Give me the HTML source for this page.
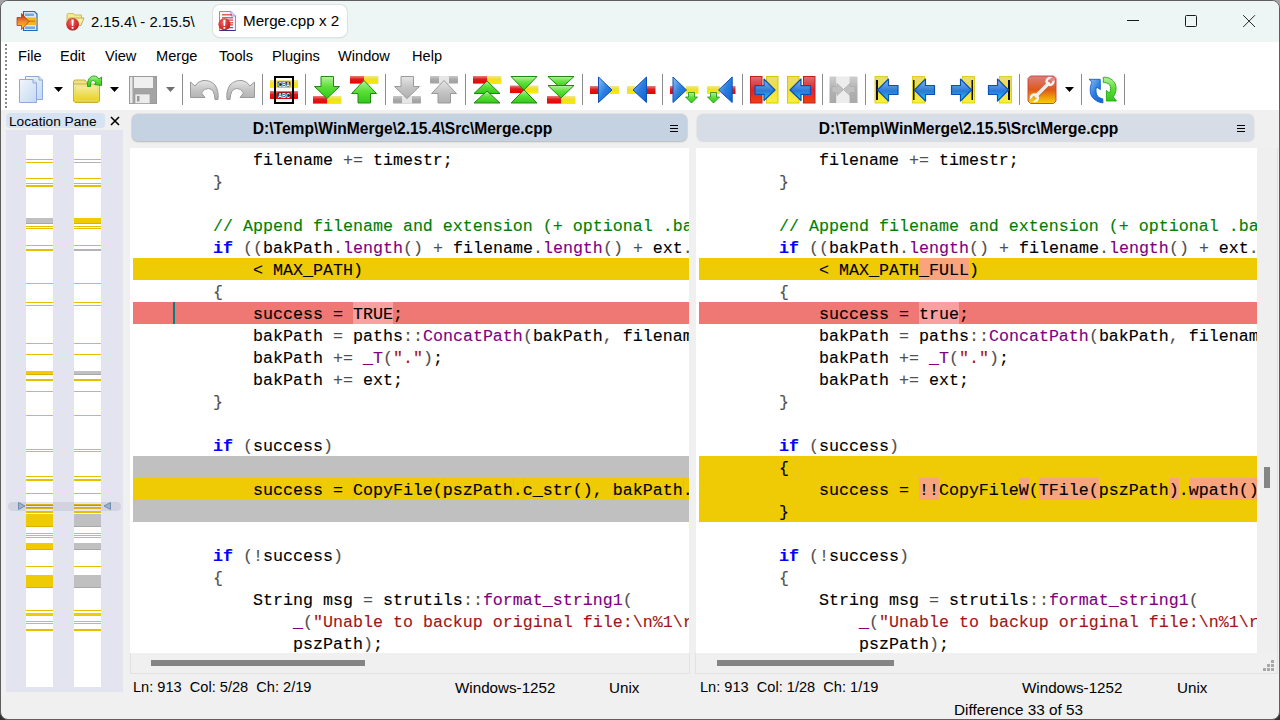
<!DOCTYPE html>
<html><head><meta charset="utf-8">
<style>
*{margin:0;padding:0;box-sizing:border-box}
html,body{width:1280px;height:720px;overflow:hidden;background:linear-gradient(#a4a4a4,#8a8a8a 60%,#303030)}
body{position:relative;font-family:"Liberation Sans",sans-serif;color:#000}
.abs{position:absolute}
#win{position:absolute;left:0;top:0;width:1280px;height:720px;border-radius:8px;background:#f0f0f0;overflow:hidden;border:1px solid #5e5e5e}
#title{position:absolute;left:-1px;top:-1px;width:1280px;height:43px;background:#eef5f5}
#menu{position:absolute;left:-1px;top:41px;width:1280px;height:68px;background:#fff}
.mi{position:absolute;top:48px;font-size:14.6px;color:#000;white-space:pre}
.tab2{position:absolute;left:213px;top:5px;width:134px;height:32px;background:#fff;border-radius:7px;box-shadow:0 0 0 1px #dde3e3, 0 1px 2px rgba(0,0,0,.12)}
.ttl{position:absolute;top:12px;font-size:15.2px;white-space:pre}
.sep{position:absolute;top:74px;width:1px;height:31px;background:#8c8c8c}
#loc{position:absolute;left:6px;top:130px;width:117px;height:562px;background:#e4e4f0}
.lbar{position:absolute;top:135px;width:27px;height:552px;background:#fff}
.lm{position:absolute;width:27px}
.hdr{position:absolute;top:114px;height:27px;border-radius:6px;font-weight:bold;font-size:15.6px;text-align:center;line-height:30px;padding-right:14px;white-space:pre}
.pane{position:absolute;top:148px;height:505px;background:#fff;overflow:hidden}
.code{position:absolute;left:3px;top:0;width:2000px;height:505px}
.bg{position:absolute;left:0;width:2000px;height:22px}
.bg.y{background:#efcb05} .bg.r{background:#ef7774} .bg.g{background:#c0c0c0}
.wy{position:absolute;height:22px;background:#f8a47c}
.wr{position:absolute;height:22px;background:#f9a0a0}
.mk{position:absolute;width:1px;height:22px;background:#f4a0a0}
.caret{position:absolute;width:2px;height:22px;background:#008080}
.ln{position:absolute;left:0;height:22px;line-height:22px;padding-top:2px;font-family:"Liberation Mono",monospace;font-size:16.667px;white-space:pre;color:#000;-webkit-text-stroke:0.12px currentColor}
.ln i{font-style:normal}
.ln .k{color:#0000ff;font-weight:bold}
.ln .f{color:#800080}
.ln .o{color:#505050}
.ln .c{color:#008000}
.ln .s{color:#a31515}
.hs{position:absolute;top:653px;height:20px;background:#f0f0f0}
.hthumb{position:absolute;top:660px;height:6px;background:#858585}
.st{position:absolute;font-size:14.6px;white-space:pre;color:#000}
</style></head><body>
<div id="win">
<div id="title"></div>
<div id="menu"></div>
</div>
<!-- gripper -->
<div class="abs" style="left:5px;top:44px;width:2px;height:28px;background-image:linear-gradient(#8a8a8a 50%,transparent 50%);background-size:2px 4px"></div>
<div class="abs" style="left:5px;top:74px;width:2px;height:34px;background-image:linear-gradient(#8a8a8a 50%,transparent 50%);background-size:2px 4px"></div>
<div class="tab2"></div>
<svg style="position:absolute;left:0;top:0" width="260" height="40" viewBox="0 0 260 40"><defs><linearGradient id="gArr" x1="0" y1="0" x2="0" y2="1"><stop offset="0" stop-color="#b82010"/><stop offset="0.5" stop-color="#f08830"/><stop offset="1" stop-color="#f8d020"/></linearGradient><radialGradient id="gErr2" cx="0.4" cy="0.35" r="0.7"><stop offset="0" stop-color="#f06060"/><stop offset="1" stop-color="#c01818"/></radialGradient></defs><path d="M23.5,11.5 H34.5 L37,14 V30.5 H23.5 Z" fill="#d8e8f8" stroke="#1a6cc0" stroke-width="1.2"/><rect x="25" y="13.5" width="9" height="2.5" fill="#5a9ae0" opacity=".8"/><rect x="25" y="26.5" width="10" height="2.5" fill="#5a9ae0" opacity=".8"/><rect x="24" y="17.5" width="12.5" height="7.5" fill="#f0b820"/><rect x="28" y="20.5" width="7" height="1.5" fill="#e08000"/><path d="M17,17.5 H21.5 V13.5 L29,21.5 L21.5,29.5 V25.5 H17 Z" fill="url(#gArr)" stroke="#a03010" stroke-width=".7"/><path d="M67,15 Q67,13.5 68.5,13.5 H73 L75,15 H81.5 V24 H67 Z" fill="#f4e890" stroke="#c8b040" stroke-width=".8"/><path d="M69,18 H84 L81,25.5 H67 Z" fill="#f8f0a8" stroke="#b8a040" stroke-width=".8"/><circle cx="72.6" cy="24.2" r="6.3" fill="url(#gErr2)"/><path d="M71.4,19.5 H73.8 L73.3,26 H71.9 Z" fill="#fff"/><rect x="71.7" y="27" width="1.8" height="1.8" fill="#fff"/><path d="M219.5,11.5 H231 L235.5,16 V30.5 H219.5 Z" fill="#f4f4ff" stroke="#8888f0" stroke-width="1"/><path d="M231,11.5 V16 H235.5" fill="#d0d0f8" stroke="#8888f0" stroke-width=".8"/><rect x="222" y="14.2" width="10" height="1.2" fill="#d04040"/><rect x="222" y="17.2" width="11" height="1.2" fill="#d04040"/><rect x="222" y="19.5" width="11" height="1.2" fill="#d04040"/><rect x="222" y="22.2" width="11" height="1.2" fill="#d04040"/><rect x="222" y="24.3" width="11" height="1.2" fill="#d04040"/><rect x="222" y="27" width="11" height="1.2" fill="#d04040"/><rect x="219.5" y="30" width="16" height="1" fill="#303090"/><circle cx="224.4" cy="24.3" r="6" fill="url(#gErr2)"/><path d="M223.2,19.7 H225.6 L225.1,26 H223.7 Z" fill="#fff"/><rect x="223.5" y="27" width="1.8" height="1.8" fill="#fff"/></svg>
<div class="ttl" style="left:91px;font-size:14.8px;top:13.8px">2.15.4\ - 2.15.5\</div>
<div class="ttl" style="left:243px">Merge.cpp x 2</div>
<!-- window controls -->
<div class="abs" style="left:1127px;top:20px;width:12px;height:1px;background:#1a1a1a"></div>
<div class="abs" style="left:1185px;top:15px;width:12px;height:12px;border:1px solid #1a1a1a;border-radius:1.5px"></div>
<svg class="abs" style="left:1242px;top:14px" width="15" height="15" viewBox="0 0 15 15"><path d="M1.2 1.2L13 13M13 1.2L1.2 13" stroke="#1a1a1a" stroke-width="0.95"/></svg>
<!-- menu -->
<div class="mi" style="left:18px">File</div>
<div class="mi" style="left:60px">Edit</div>
<div class="mi" style="left:105px">View</div>
<div class="mi" style="left:156px">Merge</div>
<div class="mi" style="left:219px">Tools</div>
<div class="mi" style="left:272px">Plugins</div>
<div class="mi" style="left:338px">Window</div>
<div class="mi" style="left:412px">Help</div>
<svg style="position:absolute;left:0;top:0" width="1280" height="112" viewBox="0 0 1280 112">
<defs>
<linearGradient id="gGreen" x1="0" y1="0" x2="0" y2="1"><stop offset="0" stop-color="#b8f0a0"/><stop offset="0.45" stop-color="#5ee03a"/><stop offset="1" stop-color="#30c818"/></linearGradient>
<linearGradient id="gRed" x1="0" y1="0" x2="0" y2="1"><stop offset="0" stop-color="#e88080"/><stop offset="0.45" stop-color="#e01818"/><stop offset="1" stop-color="#f00000"/></linearGradient>
<linearGradient id="gYel" x1="0" y1="0" x2="0" y2="1"><stop offset="0" stop-color="#f0e890"/><stop offset="0.45" stop-color="#f0e020"/><stop offset="1" stop-color="#f8ec00"/></linearGradient>
<linearGradient id="gRedV" x1="0" y1="0" x2="0" y2="1"><stop offset="0" stop-color="#d87078"/><stop offset="0.5" stop-color="#e82020"/><stop offset="1" stop-color="#f04010"/></linearGradient>
<linearGradient id="gYelV" x1="0" y1="0" x2="0" y2="1"><stop offset="0" stop-color="#e8dc78"/><stop offset="0.5" stop-color="#f0e030"/><stop offset="1" stop-color="#f8f040"/></linearGradient>
<linearGradient id="gBlue" x1="0" y1="0" x2="1" y2="1"><stop offset="0" stop-color="#90c0f0"/><stop offset="0.5" stop-color="#2a7ee0"/><stop offset="1" stop-color="#1060d0"/></linearGradient>
<linearGradient id="gBlueA" x1="0" y1="0" x2="0" y2="1"><stop offset="0" stop-color="#88b8ee"/><stop offset="0.55" stop-color="#2a78d8"/><stop offset="1" stop-color="#10d8f0"/></linearGradient>
<linearGradient id="gGray" x1="0" y1="0" x2="0" y2="1"><stop offset="0" stop-color="#e6e6e6"/><stop offset="0.5" stop-color="#c4c4c4"/><stop offset="1" stop-color="#b0b0b0"/></linearGradient>
<linearGradient id="gGrayBar" x1="0" y1="0" x2="0" y2="1"><stop offset="0" stop-color="#c8c8c8"/><stop offset="0.5" stop-color="#a8a8a8"/><stop offset="1" stop-color="#a0a0a0"/></linearGradient>
<linearGradient id="gDoc" x1="0" y1="0" x2="1" y2="1"><stop offset="0" stop-color="#f4f6fa"/><stop offset="1" stop-color="#c2d8f4"/></linearGradient>
<linearGradient id="gFold" x1="0" y1="0" x2="0" y2="1"><stop offset="0" stop-color="#f6f0b0"/><stop offset="0.6" stop-color="#ecdc50"/><stop offset="1" stop-color="#e8d010"/></linearGradient>
<linearGradient id="gWrench" x1="0" y1="0" x2="0" y2="1"><stop offset="0" stop-color="#d88080"/><stop offset="0.5" stop-color="#e05818"/><stop offset="1" stop-color="#f8d400"/></linearGradient>
<radialGradient id="gErr" cx="0.4" cy="0.35" r="0.7"><stop offset="0" stop-color="#f06060"/><stop offset="1" stop-color="#c01818"/></radialGradient>
</defs>
<rect x="182" y="74" width="1" height="31" fill="#8c8c8c"/><rect x="262" y="74" width="1" height="31" fill="#8c8c8c"/><rect x="305" y="74" width="1" height="31" fill="#8c8c8c"/><rect x="385" y="74" width="1" height="31" fill="#8c8c8c"/><rect x="465" y="74" width="1" height="31" fill="#8c8c8c"/><rect x="582" y="74" width="1" height="31" fill="#8c8c8c"/><rect x="662" y="74" width="1" height="31" fill="#8c8c8c"/><rect x="742" y="74" width="1" height="31" fill="#8c8c8c"/><rect x="822" y="74" width="1" height="31" fill="#8c8c8c"/><rect x="865" y="74" width="1" height="31" fill="#8c8c8c"/><rect x="1019" y="74" width="1" height="31" fill="#8c8c8c"/><rect x="1081" y="74" width="1" height="31" fill="#8c8c8c"/><rect x="1124" y="74" width="1" height="31" fill="#8c8c8c"/><polygon points="54,87 63,87 58.5,92" fill="#000"/><polygon points="110,87 119,87 114.5,92" fill="#000"/><polygon points="166,87 175,87 170.5,92" fill="#707070"/><polygon points="1065,87 1074,87 1069.5,92" fill="#000"/><path d="M25.5,76.5 H39 L42.5,80 V99.5 H25.5 Z" fill="url(#gDoc)" stroke="#8ca8dc" stroke-width="1"/><path d="M39,76.5 V80 H42.5" fill="#dfe8f6" stroke="#8ca8dc" stroke-width="1"/><path d="M19.5,79.5 H33 L36.5,83 V102.5 H19.5 Z" fill="url(#gDoc)" stroke="#8ca8dc" stroke-width="1"/><path d="M33,79.5 V83 H36.5" fill="#dfe8f6" stroke="#8ca8dc" stroke-width="1"/><path d="M73.5,82 Q73.5,80 75.5,80 H85 L87,82.5 V85 H73.5 Z" fill="#eee090" stroke="#c8b030" stroke-width="1"/><path d="M73.5,84 H99.5 V101 L98,102.5 H75 L73.5,101 Z" fill="url(#gFold)" stroke="#c8b030" stroke-width="1"/><path d="M75.5,86 H97.5 V100.5 H75.5 Z" fill="none" stroke="#e8d870" stroke-width="1" opacity=".7"/><path d="M87.5,86.5 C87,80 90,76 94,76 C96.5,76 98,77.5 99,79 L101.5,77 L101.5,85.5 L94.5,84.5 L96,83 C95,81 94,80.5 93,80.5 C91.5,80.5 90.5,82 90.5,86.5 Z" fill="url(#gGreen)" stroke="#10a010" stroke-width="0.9" stroke-linejoin="round"/><rect x="129.5" y="76.5" width="27" height="27" fill="#a4a4a4" stroke="#9a9a9a" stroke-width="1"/><rect x="134" y="77" width="19" height="11" fill="#f0f0f0"/><rect x="130" y="77" width="2.5" height="26" fill="#e8e8e8"/><rect x="135" y="94" width="15" height="9.5" fill="#ececec" stroke="#999" stroke-width=".6"/><rect x="137" y="96" width="2.5" height="5.5" fill="#999"/><path transform="translate(190,80)" d="M0.5,2 V17.5 H15 L11.5,13 Q14,8 18.5,8.5 Q24.5,9 25,19.5 H28 Q29,11 25,5 Q20.5,0 13,0.5 Q8,1 5,6 Z" fill="url(#gGray)" stroke="#9a9a9a" stroke-width="1"/><path transform="translate(255,80) scale(-1,1)" d="M0.5,2 V17.5 H15 L11.5,13 Q14,8 18.5,8.5 Q24.5,9 25,19.5 H28 Q29,11 25,5 Q20.5,0 13,0.5 Q8,1 5,6 Z" fill="url(#gGray)" stroke="#9a9a9a" stroke-width="1"/><rect x="270" y="80" width="28" height="8" fill="url(#gYel)"/><rect x="270" y="91" width="28" height="8" fill="url(#gRed)"/><rect x="275" y="77" width="18" height="26" fill="none" stroke="#000" stroke-width="2"/><rect x="276" y="78" width="16" height="2" fill="#fff"/><rect x="276" y="88" width="16" height="3" fill="#fff"/><rect x="276" y="99" width="16" height="3" fill="#fff"/><rect x="277.5" y="81.5" width="13" height="5.5" rx="1" fill="#202838" stroke="#c0a010" stroke-width=".8"/><rect x="277.5" y="92.5" width="13" height="5.5" rx="1" fill="#203030" stroke="#b01010" stroke-width=".8"/><text x="284" y="87.2" font-family="Liberation Sans" font-weight="bold" font-size="7" fill="#f0f0f0" text-anchor="middle" textLength="12" lengthAdjust="spacingAndGlyphs">CBA</text><text x="284" y="98.2" font-family="Liberation Sans" font-weight="bold" font-size="7" fill="#f0f0f0" text-anchor="middle" textLength="12" lengthAdjust="spacingAndGlyphs">ABC</text><rect x="313.5" y="96.5" width="28" height="7.5" fill="#888" opacity=".35"/><rect x="313" y="96" width="14.0" height="7.5" fill="url(#gRed)"/><rect x="327.0" y="96" width="14.0" height="7.5" fill="url(#gYel)"/><path d="M321,76.5 H333.5 V86.5 H339.5 L327,98.5 L314.5,86.5 H321 Z" fill="url(#gGreen)" stroke="#1e8a10" stroke-width="1" stroke-linejoin="round"/><rect x="350.5" y="76.5" width="28" height="7.5" fill="#888" opacity=".35"/><rect x="350" y="76" width="14.0" height="7.5" fill="url(#gRed)"/><rect x="364.0" y="76" width="14.0" height="7.5" fill="url(#gYel)"/><path d="M358,103 H370.5 V93.5 H376.5 L364,80.5 L351.5,93.5 H358 Z" fill="url(#gGreen)" stroke="#1e8a10" stroke-width="1" stroke-linejoin="round"/><rect x="393" y="96" width="28" height="7.5" fill="url(#gGrayBar)" rx="0.8"/><rect x="402.0" y="96" width="10" height="7.5" fill="#e6e6e6"/><path d="M401,76.5 H413.5 V86.5 H419.5 L407,98.5 L394.5,86.5 H401 Z" fill="url(#gGray)" stroke="#9a9a9a" stroke-width="1" stroke-linejoin="round"/><rect x="430" y="76" width="28" height="7.5" fill="url(#gGrayBar)" rx="0.8"/><rect x="439.0" y="76" width="10" height="7.5" fill="#e6e6e6"/><path d="M438,103 H450.5 V93.5 H456.5 L444,80.5 L431.5,93.5 H438 Z" fill="url(#gGray)" stroke="#9a9a9a" stroke-width="1" stroke-linejoin="round"/><rect x="473.5" y="76.5" width="28" height="7.5" fill="#888" opacity=".35"/><rect x="473" y="76" width="14.0" height="7.5" fill="url(#gRed)"/><rect x="487.0" y="76" width="14.0" height="7.5" fill="url(#gYel)"/><polygon points="487,81 500,93.5 474,93.5" fill="url(#gGreen)" stroke="#1e8a10" stroke-width="1" stroke-linejoin="round"/><polygon points="487,91 500,103 474,103" fill="url(#gGreen)" stroke="#1e8a10" stroke-width="1" stroke-linejoin="round"/><rect x="510.5" y="86.0" width="28" height="7.5" fill="#888" opacity=".35"/><rect x="510" y="85.5" width="14.0" height="7.5" fill="url(#gRed)"/><rect x="524.0" y="85.5" width="14.0" height="7.5" fill="url(#gYel)"/><polygon points="511,76.5 537,76.5 524,90" fill="url(#gGreen)" stroke="#1e8a10" stroke-width="1" stroke-linejoin="round"/><polygon points="524,90 537,103 511,103" fill="url(#gGreen)" stroke="#1e8a10" stroke-width="1" stroke-linejoin="round"/><rect x="547.5" y="96.5" width="28" height="7.5" fill="#888" opacity=".35"/><rect x="547" y="96" width="14.0" height="7.5" fill="url(#gRed)"/><rect x="561.0" y="96" width="14.0" height="7.5" fill="url(#gYel)"/><polygon points="548,76.5 574,76.5 561,88.5" fill="url(#gGreen)" stroke="#1e8a10" stroke-width="1" stroke-linejoin="round"/><polygon points="548,85.5 574,85.5 561,98" fill="url(#gGreen)" stroke="#1e8a10" stroke-width="1" stroke-linejoin="round"/><rect x="590" y="86" width="10" height="8" fill="url(#gRed)"/><rect x="609.5" y="86" width="9.5" height="8" fill="url(#gYel)"/><polygon points="598.5,77 612,90 598.5,102.5" fill="url(#gBlue)" stroke="#0a50b8" stroke-width="1" stroke-linejoin="round"/><rect x="627" y="86" width="10" height="8" fill="url(#gYel)"/><rect x="646" y="86" width="9.5" height="8" fill="url(#gRed)"/><polygon points="646.5,77 633,90 646.5,102.5" fill="url(#gBlue)" stroke="#0a50b8" stroke-width="1" stroke-linejoin="round"/><rect x="670" y="86" width="4" height="8" fill="url(#gRed)"/><rect x="686" y="86" width="12.5" height="8" fill="url(#gYel)"/><polygon points="673,77 686.5,90 673,102.5" fill="url(#gBlue)" stroke="#0a50b8" stroke-width="1" stroke-linejoin="round"/><path d="M688.5,92.5 H694.5 V97 H697.5 L691.5,103 L685.5,97 H688.5 Z" fill="url(#gGreen)" stroke="#1e8a10" stroke-width=".8" stroke-linejoin="round"/><rect x="707" y="86" width="13" height="8" fill="url(#gYel)"/><rect x="732" y="86" width="3.5" height="8" fill="url(#gRed)"/><polygon points="732.2,77 718.6,90 732.2,102.5" fill="url(#gBlue)" stroke="#0a50b8" stroke-width="1" stroke-linejoin="round"/><path d="M710.5,92.5 H716.5 V97 H719.5 L713.5,103 L707.5,97 H710.5 Z" fill="url(#gGreen)" stroke="#1e8a10" stroke-width=".8" stroke-linejoin="round"/><rect x="750.5" y="76.5" width="11.5" height="26.5" fill="url(#gRedV)" stroke="#c02020" stroke-width="1"/><rect x="766.5" y="76.5" width="11.5" height="26.5" fill="url(#gYelV)" stroke="#d8c800" stroke-width="1"/><path d="M755,85.7 H764 V79 L775,90 L764,100.5 V94.3 H755 Z" fill="url(#gBlueA)" stroke="#0a50b8" stroke-width="1.2" stroke-linejoin="round"/><rect x="787.5" y="76.5" width="11.5" height="26.5" fill="url(#gYelV)" stroke="#d8c800" stroke-width="1"/><rect x="803.5" y="76.5" width="11.5" height="26.5" fill="url(#gRedV)" stroke="#c02020" stroke-width="1"/><path d="M810.5,85.7 H801 V79 L790,90 L801,100.5 V94.3 H810.5 Z" fill="url(#gBlueA)" stroke="#0a50b8" stroke-width="1.2" stroke-linejoin="round"/><rect x="829.5" y="76.5" width="7" height="26.5" fill="url(#gGrayBar)" opacity=".9"/><rect x="836.5" y="76.5" width="13" height="26.5" fill="#ececec"/><rect x="849.5" y="76.5" width="8" height="26.5" fill="url(#gGrayBar)" opacity=".9"/><path d="M832,86.5 H837 V83.5 L843.5,89.5 L837,95.5 V92.5 H832 Z" fill="#c0c0c0" stroke="#adadad" stroke-width=".8"/><path d="M855,86.5 H850 V83.5 L843.5,89.5 L850,95.5 V92.5 H855 Z" fill="#c0c0c0" stroke="#adadad" stroke-width=".8"/><rect x="875" y="76.5" width="12.5" height="26.5" fill="url(#gYelV)" stroke="#d8c800" stroke-width=".8"/><rect x="876" y="80" width="2" height="20" fill="#101010"/><path d="M898,85.5 H888.5 V79 L877.5,90 L888.5,101 V94.5 H898 Z" fill="url(#gBlueA)" stroke="#0a50b8" stroke-width="1.2" stroke-linejoin="round"/><rect x="912.5" y="76.5" width="12.0" height="26.5" fill="url(#gYelV)" stroke="#d8c800" stroke-width=".8"/><rect x="913" y="80" width="1.5" height="20" fill="#101010"/><path d="M934.5,85.5 H925.5 V79 L914.5,90 L925.5,101 V94.5 H934.5 Z" fill="url(#gBlueA)" stroke="#0a50b8" stroke-width="1.2" stroke-linejoin="round"/><rect x="962.5" y="76.5" width="12.0" height="26.5" fill="url(#gYelV)" stroke="#d8c800" stroke-width=".8"/><rect x="971.5" y="80" width="1.5" height="20" fill="#101010"/><path d="M951.5,85.5 H960.5 V79 L971.5,90 L960.5,101 V94.5 H951.5 Z" fill="url(#gBlueA)" stroke="#0a50b8" stroke-width="1.2" stroke-linejoin="round"/><rect x="999.5" y="76.5" width="12.0" height="26.5" fill="url(#gYelV)" stroke="#d8c800" stroke-width=".8"/><rect x="1008" y="80" width="2" height="20" fill="#101010"/><path d="M988.5,85.5 H997.5 V79 L1008.5,90 L997.5,101 V94.5 H988.5 Z" fill="url(#gBlueA)" stroke="#0a50b8" stroke-width="1.2" stroke-linejoin="round"/><path d="M1030.5,76 H1053.5 L1056,78.5 V101 L1053.5,103.5 H1030.5 L1028,101 V78.5 Z" fill="url(#gWrench)" stroke="#c84040" stroke-width="0.9"/><path d="M1036.5,96 L1048.5,84" stroke="#9a6a5a" stroke-width="3.6" stroke-linecap="round" opacity=".35" transform="translate(0.6,0.8)"/><path d="M1036,96 L1048.5,83.5" stroke="#eeeeee" stroke-width="3.4" stroke-linecap="round"/><circle cx="1050" cy="81.5" r="3.4" fill="none" stroke="#f2f2f2" stroke-width="2.5"/><circle cx="1052" cy="79.5" r="2" fill="#d88a8a"/><circle cx="1034.5" cy="97.8" r="3.4" fill="none" stroke="#f2f2f2" stroke-width="2.5"/><circle cx="1032.5" cy="99.8" r="2" fill="#f0c010"/><path d="M1089,79.3 H1100.2 L1100.4,89.6 L1096.5,87 C1095.5,90 1096,94 1097.5,96 C1099,97.8 1101,98.5 1102.7,98.8 L1103,102.8 C1099,102.8 1094,100 1091.5,96 C1089.5,92 1090,86 1092,82 Z" fill="url(#gBlue)" stroke="#1560c8" stroke-width="0.9" stroke-linejoin="round"/><path d="M1103.3,77.3 C1107.5,77 1112,78.5 1114.5,82.5 C1117,86.5 1116.5,93 1113.2,96.8 L1116.5,101 H1106.4 L1106.4,90.4 L1109.5,93 C1111,90.5 1111,86.5 1109.5,84.8 C1108,83 1105.5,82.5 1103.3,82.5 Z" fill="url(#gGreen)" stroke="#22a814" stroke-width="0.9" stroke-linejoin="round"/></svg>
<!-- location pane -->
<div class="abs" style="left:6px;top:113px;width:99px;height:15px;background:#d5e3f2;border-radius:4px"></div>
<div class="abs" style="left:9px;top:114px;font-size:13.7px;white-space:pre">Location Pane</div>
<svg class="abs" style="left:110px;top:116px" width="10" height="10" viewBox="0 0 10 10"><path d="M1 1L9 9M9 1L1 9" stroke="#000" stroke-width="1.6"/></svg>
<div id="loc"></div>
<div class="lbar" style="left:26px"></div>
<div class="lbar" style="left:74px"></div>
<div class="lm" style="left:26px;top:159px;height:1px;background:#e6c000"></div>
<div class="lm" style="left:74px;top:159px;height:1px;background:#e6c000"></div>
<div class="lm" style="left:26px;top:162px;height:1px;background:#e6c000"></div>
<div class="lm" style="left:74px;top:162px;height:1px;background:#b4b4b4"></div>
<div class="lm" style="left:26px;top:178px;height:1px;background:#e6c000"></div>
<div class="lm" style="left:74px;top:178px;height:1px;background:#e6c000"></div>
<div class="lm" style="left:26px;top:183px;height:1px;background:#e6c000"></div>
<div class="lm" style="left:74px;top:183px;height:1px;background:#b4b4b4"></div>
<div class="lm" style="left:26px;top:185px;height:2px;background:#e6c000"></div>
<div class="lm" style="left:74px;top:185px;height:2px;background:#e6c000"></div>
<div class="lm" style="left:26px;top:218px;height:6px;background:#c0c0c0;border-bottom:1px solid #a8a8a8"></div>
<div class="lm" style="left:74px;top:218px;height:6px;background:#efcb05;border-bottom:1px solid #d8b400"></div>
<div class="lm" style="left:26px;top:226px;height:1px;background:#e6c000"></div>
<div class="lm" style="left:74px;top:226px;height:1px;background:#e6c000"></div>
<div class="lm" style="left:26px;top:228px;height:1px;background:#e6c000"></div>
<div class="lm" style="left:74px;top:228px;height:1px;background:#e6c000"></div>
<div class="lm" style="left:26px;top:245px;height:1px;background:#e6c000"></div>
<div class="lm" style="left:74px;top:245px;height:1px;background:#e6c000"></div>
<div class="lm" style="left:26px;top:249px;height:2px;background:#e6c000"></div>
<div class="lm" style="left:74px;top:249px;height:2px;background:#b4b4b4"></div>
<div class="lm" style="left:26px;top:283px;height:1px;background:#e6c000"></div>
<div class="lm" style="left:74px;top:283px;height:1px;background:#e6c000"></div>
<div class="lm" style="left:26px;top:302px;height:1px;background:#e6c000"></div>
<div class="lm" style="left:74px;top:302px;height:1px;background:#e6c000"></div>
<div class="lm" style="left:26px;top:305px;height:1px;background:#e6c000"></div>
<div class="lm" style="left:74px;top:305px;height:1px;background:#e6c000"></div>
<div class="lm" style="left:26px;top:343px;height:1px;background:#e6c000"></div>
<div class="lm" style="left:74px;top:343px;height:1px;background:#e6c000"></div>
<div class="lm" style="left:26px;top:354px;height:1px;background:#e6c000"></div>
<div class="lm" style="left:74px;top:354px;height:1px;background:#e6c000"></div>
<div class="lm" style="left:26px;top:371px;height:4px;background:#efcb05;border-bottom:1px solid #d8b400"></div>
<div class="lm" style="left:74px;top:371px;height:4px;background:#c0c0c0;border-bottom:1px solid #a8a8a8"></div>
<div class="lm" style="left:26px;top:379px;height:2px;background:#e6c000"></div>
<div class="lm" style="left:74px;top:379px;height:2px;background:#e6c000"></div>
<div class="lm" style="left:26px;top:391px;height:1px;background:#e6c000"></div>
<div class="lm" style="left:74px;top:391px;height:1px;background:#b4b4b4"></div>
<div class="lm" style="left:26px;top:415px;height:1px;background:#e6c000"></div>
<div class="lm" style="left:74px;top:415px;height:1px;background:#e6c000"></div>
<div class="lm" style="left:26px;top:449px;height:1px;background:#e6c000"></div>
<div class="lm" style="left:74px;top:449px;height:1px;background:#e6c000"></div>
<div class="lm" style="left:26px;top:451px;height:1px;background:#e6c000"></div>
<div class="lm" style="left:74px;top:451px;height:1px;background:#e6c000"></div>
<div class="lm" style="left:26px;top:476px;height:1px;background:#e6c000"></div>
<div class="lm" style="left:74px;top:476px;height:1px;background:#e6c000"></div>
<div class="lm" style="left:26px;top:479px;height:2px;background:#e6c000"></div>
<div class="lm" style="left:74px;top:479px;height:2px;background:#e6c000"></div>
<div class="lm" style="left:26px;top:493px;height:1px;background:#e6c000"></div>
<div class="lm" style="left:74px;top:493px;height:1px;background:#e6c000"></div>
<div class="lm" style="left:26px;top:504px;height:1px;background:#e6c000"></div>
<div class="lm" style="left:74px;top:504px;height:1px;background:#e6c000"></div>
<div class="lm" style="left:26px;top:505px;height:1px;background:#e87070"></div>
<div class="lm" style="left:74px;top:505px;height:1px;background:#e87070"></div>
<div class="lm" style="left:26px;top:507px;height:1px;background:#a0a0a0"></div>
<div class="lm" style="left:74px;top:507px;height:1px;background:#e6c000"></div>
<div class="lm" style="left:26px;top:508px;height:1px;background:#e6c000"></div>
<div class="lm" style="left:74px;top:508px;height:1px;background:#e6c000"></div>
<div class="lm" style="left:26px;top:511px;height:2px;background:#e6c000"></div>
<div class="lm" style="left:74px;top:511px;height:2px;background:#e6c000"></div>
<div class="lm" style="left:26px;top:514px;height:13px;background:#efcb05;border-bottom:1px solid #d8b400"></div>
<div class="lm" style="left:74px;top:514px;height:13px;background:#c0c0c0;border-bottom:1px solid #a8a8a8"></div>
<div class="lm" style="left:26px;top:533px;height:1px;background:#e6c000"></div>
<div class="lm" style="left:74px;top:533px;height:1px;background:#e6c000"></div>
<div class="lm" style="left:26px;top:535px;height:1px;background:#e6c000"></div>
<div class="lm" style="left:74px;top:535px;height:1px;background:#e6c000"></div>
<div class="lm" style="left:26px;top:537px;height:1px;background:#e6c000"></div>
<div class="lm" style="left:74px;top:537px;height:1px;background:#b4b4b4"></div>
<div class="lm" style="left:26px;top:543px;height:7px;background:#efcb05;border-bottom:1px solid #d8b400"></div>
<div class="lm" style="left:74px;top:543px;height:7px;background:#c0c0c0;border-bottom:1px solid #a8a8a8"></div>
<div class="lm" style="left:26px;top:566px;height:1px;background:#e6c000"></div>
<div class="lm" style="left:74px;top:566px;height:1px;background:#e6c000"></div>
<div class="lm" style="left:26px;top:575px;height:13px;background:#efcb05;border-bottom:1px solid #d8b400"></div>
<div class="lm" style="left:74px;top:575px;height:13px;background:#c0c0c0;border-bottom:1px solid #a8a8a8"></div>
<div class="lm" style="left:26px;top:610px;height:1px;background:#e6c000"></div>
<div class="lm" style="left:74px;top:610px;height:1px;background:#e6c000"></div>
<div class="lm" style="left:26px;top:613px;height:3px;background:#efcb05"></div>
<div class="lm" style="left:74px;top:613px;height:3px;background:#efcb05"></div>
<div class="lm" style="left:26px;top:621px;height:1px;background:#e6c000"></div>
<div class="lm" style="left:74px;top:621px;height:1px;background:#e6c000"></div>
<div class="lm" style="left:26px;top:623px;height:1px;background:#e6c000"></div>
<div class="lm" style="left:74px;top:623px;height:1px;background:#e6c000"></div>
<div class="lm" style="left:26px;top:629px;height:2px;background:#e6c000"></div>
<div class="lm" style="left:74px;top:629px;height:2px;background:#e6c000"></div>
<div class="abs" style="left:8px;top:502px;width:113px;height:9px;border-radius:5px;background:rgba(140,140,165,.2)"></div>
<svg class="abs" style="left:17px;top:501px" width="10" height="10" viewBox="0 0 10 10"><path d="M1.5 1.5L8 5L1.5 8.5Z" fill="#9ab0cc" stroke="#6f8cb0" stroke-width="1"/></svg>
<svg class="abs" style="left:102px;top:501px" width="10" height="10" viewBox="0 0 10 10"><path d="M8.5 1.5L2 5L8.5 8.5Z" fill="#9ab0cc" stroke="#6f8cb0" stroke-width="1"/></svg>
<!-- headers -->
<div class="hdr" style="left:132px;width:555px;background:#c5d2e2;box-shadow:0 0 0 1px rgba(0,0,0,.05),0 1px 2px rgba(0,0,0,.2)">D:\Temp\WinMerge\2.15.4\Src\Merge.cpp</div>
<div class="abs" style="left:670px;top:125px;width:8px;height:1px;background:#000;box-shadow:0 3px 0 #000,0 6px 0 #000"></div>
<div class="hdr" style="left:697px;width:557px;background:#d6dde6;box-shadow:0 0 0 1px rgba(0,0,0,.03),0 1px 2px rgba(0,0,0,.06)">D:\Temp\WinMerge\2.15.5\Src\Merge.cpp</div>
<div class="abs" style="left:1237px;top:125px;width:8px;height:1px;background:#000;box-shadow:0 3px 0 #000,0 6px 0 #000"></div>
<!-- panes -->
<div class="pane" style="left:130px;width:559px"><div class="code"><div class="bg y" style="top:110px"></div>
<div class="mk" style="top:110px;left:220px"></div>
<div class="bg r" style="top:154px"></div>
<div class="wr" style="top:154px;left:220px;width:40px"></div>
<div class="bg g" style="top:308px"></div>
<div class="bg y" style="top:330px"></div>
<div class="mk" style="top:330px;left:220px"></div>
<div class="mk" style="top:330px;left:300px"></div>
<div class="mk" style="top:330px;left:310px"></div>
<div class="mk" style="top:330px;left:380px"></div>
<div class="mk" style="top:330px;left:390px"></div>
<div class="mk" style="top:330px;left:480px"></div>
<div class="mk" style="top:330px;left:550px"></div>
<div class="bg g" style="top:352px"></div>
<div class="caret" style="top:154px;left:40px"></div>
<div class="ln" style="top:0px">            filename <i class="o">+</i><i class="o">=</i> timestr;</div>
<div class="ln" style="top:22px">        <i class="o">}</i></div>
<div class="ln" style="top:66px">        <i class="c">// Append filename and extension (+ optional .bak) to the path</i></div>
<div class="ln" style="top:88px">        <i class="k">if</i> <i class="o">(</i><i class="o">(</i>bakPath<i class="o">.</i><i class="f">length</i><i class="o">(</i><i class="o">)</i> <i class="o">+</i> filename<i class="o">.</i><i class="f">length</i><i class="o">(</i><i class="o">)</i> <i class="o">+</i> ext<i class="o">.</i><i class="f">length</i><i class="o">(</i><i class="o">)</i><i class="o">)</i></div>
<div class="ln" style="top:110px">            &lt; MAX_PATH)</div>
<div class="ln" style="top:132px">        <i class="o">{</i></div>
<div class="ln" style="top:154px">            success = TRUE;</div>
<div class="ln" style="top:176px">            bakPath <i class="o">=</i> paths<i class="o">:</i><i class="o">:</i><i class="f">ConcatPath</i><i class="o">(</i>bakPath<i class="o">,</i> filename<i class="o">)</i>;</div>
<div class="ln" style="top:198px">            bakPath <i class="o">+</i><i class="o">=</i> <i class="f">_T</i><i class="o">(</i><i class="s">"."</i><i class="o">)</i>;</div>
<div class="ln" style="top:220px">            bakPath <i class="o">+</i><i class="o">=</i> ext;</div>
<div class="ln" style="top:242px">        <i class="o">}</i></div>
<div class="ln" style="top:286px">        <i class="k">if</i> <i class="o">(</i>success<i class="o">)</i></div>
<div class="ln" style="top:330px">            success = CopyFile(pszPath.c_str(), bakPath.c_str(), FALSE);</div>
<div class="ln" style="top:396px">        <i class="k">if</i> <i class="o">(</i><i class="o">!</i>success<i class="o">)</i></div>
<div class="ln" style="top:418px">        <i class="o">{</i></div>
<div class="ln" style="top:440px">            String msg <i class="o">=</i> strutils<i class="o">:</i><i class="o">:</i><i class="f">format_string1</i><i class="o">(</i></div>
<div class="ln" style="top:462px">                <i class="f">_</i><i class="o">(</i><i class="s">"Unable to backup original file:\n%1\r\n\nContinue?"</i><i class="o">)</i><i class="o">,</i></div>
<div class="ln" style="top:484px">                pszPath<i class="o">)</i>;</div></div></div>
<div class="pane" style="left:696px;width:561px"><div class="code"><div class="bg y" style="top:110px"></div>
<div class="wy" style="top:110px;left:220px;width:50px"></div>
<div class="bg r" style="top:154px"></div>
<div class="wr" style="top:154px;left:220px;width:40px"></div>
<div class="bg y" style="top:308px"></div>
<div class="bg y" style="top:330px"></div>
<div class="wy" style="top:330px;left:220px;width:20px"></div>
<div class="wy" style="top:330px;left:320px;width:10px"></div>
<div class="wy" style="top:330px;left:340px;width:60px"></div>
<div class="wy" style="top:330px;left:470px;width:10px"></div>
<div class="wy" style="top:330px;left:490px;width:70px"></div>
<div class="bg y" style="top:352px"></div>
<div class="ln" style="top:0px">            filename <i class="o">+</i><i class="o">=</i> timestr;</div>
<div class="ln" style="top:22px">        <i class="o">}</i></div>
<div class="ln" style="top:66px">        <i class="c">// Append filename and extension (+ optional .bak) to the path</i></div>
<div class="ln" style="top:88px">        <i class="k">if</i> <i class="o">(</i><i class="o">(</i>bakPath<i class="o">.</i><i class="f">length</i><i class="o">(</i><i class="o">)</i> <i class="o">+</i> filename<i class="o">.</i><i class="f">length</i><i class="o">(</i><i class="o">)</i> <i class="o">+</i> ext<i class="o">.</i><i class="f">length</i><i class="o">(</i><i class="o">)</i><i class="o">)</i></div>
<div class="ln" style="top:110px">            &lt; MAX_PATH_FULL)</div>
<div class="ln" style="top:132px">        <i class="o">{</i></div>
<div class="ln" style="top:154px">            success = true;</div>
<div class="ln" style="top:176px">            bakPath <i class="o">=</i> paths<i class="o">:</i><i class="o">:</i><i class="f">ConcatPath</i><i class="o">(</i>bakPath<i class="o">,</i> filename<i class="o">)</i>;</div>
<div class="ln" style="top:198px">            bakPath <i class="o">+</i><i class="o">=</i> <i class="f">_T</i><i class="o">(</i><i class="s">"."</i><i class="o">)</i>;</div>
<div class="ln" style="top:220px">            bakPath <i class="o">+</i><i class="o">=</i> ext;</div>
<div class="ln" style="top:242px">        <i class="o">}</i></div>
<div class="ln" style="top:286px">        <i class="k">if</i> <i class="o">(</i>success<i class="o">)</i></div>
<div class="ln" style="top:308px">        {</div>
<div class="ln" style="top:330px">            success = !!CopyFileW(TFile(pszPath).wpath().c_str(), TFile(bakPath).wpath().c_str(), false);</div>
<div class="ln" style="top:352px">        }</div>
<div class="ln" style="top:396px">        <i class="k">if</i> <i class="o">(</i><i class="o">!</i>success<i class="o">)</i></div>
<div class="ln" style="top:418px">        <i class="o">{</i></div>
<div class="ln" style="top:440px">            String msg <i class="o">=</i> strutils<i class="o">:</i><i class="o">:</i><i class="f">format_string1</i><i class="o">(</i></div>
<div class="ln" style="top:462px">                <i class="f">_</i><i class="o">(</i><i class="s">"Unable to backup original file:\n%1\r\n\nContinue?"</i><i class="o">)</i><i class="o">,</i></div>
<div class="ln" style="top:484px">                pszPath<i class="o">)</i>;</div></div></div>
<!-- vscroll -->
<div class="abs" style="left:1257px;top:148px;width:21px;height:505px;background:#efefef"></div>
<div class="abs" style="left:1264px;top:467px;width:6px;height:21px;background:#858585"></div>
<!-- hscroll -->
<div class="hthumb" style="left:151px;width:214px"></div>
<div class="hthumb" style="left:717px;width:177px"></div>
<!-- frames -->
<div class="abs" style="left:130px;top:653px;width:560px;height:21px;border:1px solid #e2e2e2;border-top:none"></div>
<div class="abs" style="left:695px;top:653px;width:583px;height:21px;border:1px solid #e2e2e2;border-top:none"></div>
<div class="abs" style="left:1256px;top:148px;width:22px;height:506px;border-right:1px solid #e2e2e2"></div>
<div class="abs" style="left:1271px;top:660px;width:3px;height:3px;background:#a8a8a8"></div><div class="abs" style="left:1267px;top:664px;width:3px;height:3px;background:#a8a8a8"></div><div class="abs" style="left:1271px;top:664px;width:3px;height:3px;background:#a8a8a8"></div><div class="abs" style="left:1263px;top:668px;width:3px;height:3px;background:#a8a8a8"></div><div class="abs" style="left:1267px;top:668px;width:3px;height:3px;background:#a8a8a8"></div><div class="abs" style="left:1271px;top:668px;width:3px;height:3px;background:#a8a8a8"></div>
<!-- status -->
<div class="st" style="left:133px;top:679px">Ln: 913  Col: 5/28  Ch: 2/19</div>
<div class="st" style="left:455px;top:679px;font-size:15.2px">Windows-1252</div>
<div class="st" style="left:609px;top:679px;font-size:15.2px">Unix</div>
<div class="st" style="left:700px;top:679px">Ln: 913  Col: 1/28  Ch: 1/19</div>
<div class="st" style="left:1022px;top:679px;font-size:15.2px">Windows-1252</div>
<div class="st" style="left:1177px;top:679px;font-size:15.2px">Unix</div>
<div class="st" style="left:954px;top:701px;font-size:15.3px">Difference 33 of 53</div>
</body></html>
